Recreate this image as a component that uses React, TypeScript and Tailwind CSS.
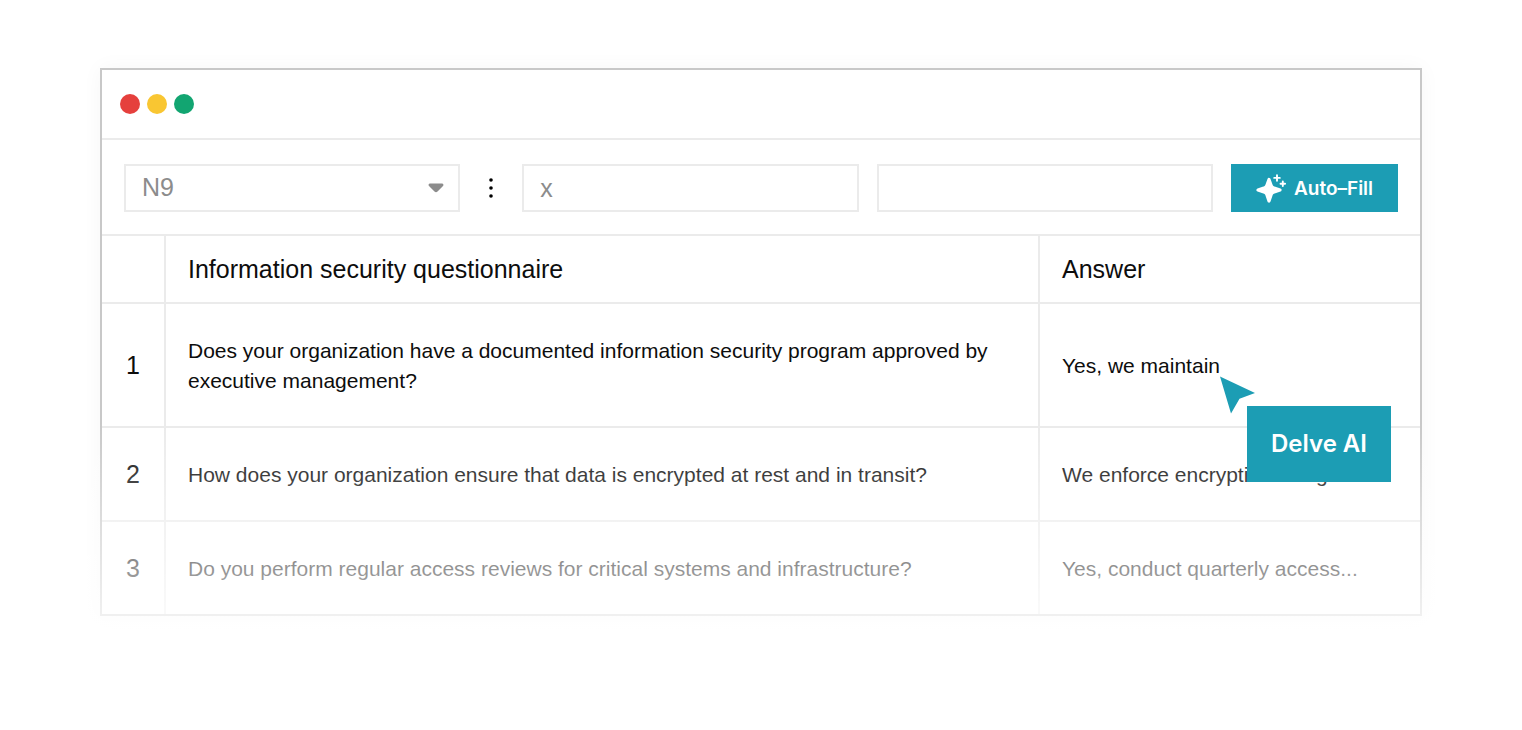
const rows = [
  {
    id: 1,
    height: "h-[124px]",
    question:
      "Does your organization have a documented information security program approved by executive management?",
    answer: "Yes, we maintain",
    active: true,
  },
  {
    id: 2,
    height: "h-[94px]",
    question:
      "How does your organization ensure that data is encrypted at rest and in transit?",
    answer: "We enforce encryption using...",
  },
  {
    id: 3,
    height: "h-[92px]",
    question:
      "Do you perform regular access reviews for critical systems and infrastructure?",
    answer: "Yes, conduct quarterly access...",
  },
];

const SparkleIcon = () => (
  <svg
    viewBox="0 1 30 30"
    className="h-[30px] w-[30px]"
    fill="white"
    aria-hidden="true"
  >
    <path
      d="M13 6.500 15.200 12.600Q15.800 14.200 17.400 14.800L24 17 17.400 19.200Q15.800 19.800 15.200 21.400L13 28 10.800 21.400Q10.200 19.800 8.600 19.200L2 17 8.600 14.800Q10.200 14.200 10.800 12.600z"
      stroke="white"
      strokeWidth="3.200"
      strokeLinejoin="round"
    />
    <path
      d="M21 2.200v5.500M18.200 4.900h5.600M26.800 8.400v4.600M24.500 10.700h4.600"
      stroke="white"
      strokeWidth="1.900"
      strokeLinecap="round"
    />
  </svg>
);

const Cursor = () => (
  <div className="absolute top-[25px] left-full z-10">
    <svg viewBox="0 0 36 38" className="h-[38px] w-9" aria-hidden="true">
      <path d="M0 0.500 35 17 19.500 22.800 11 37.500z" fill="#1c9db4" />
    </svg>
    <div className="-mt-2 ml-[27px] flex h-[76px] w-36 items-center justify-center bg-[#1c9db4] font-['Inter',sans-serif] text-2xl font-semibold whitespace-nowrap text-white">
      Delve AI
    </div>
  </div>
);

const Toolbar = () => (
  <div className="grid grid-cols-[1fr_26px_1fr_1fr_167px] items-center gap-[18px] border-b-2 border-[#ebebeb] px-[22px] pt-6 pb-[22px]">
    <div className="relative h-12">
      <select
        aria-label="Cell"
        className="h-full w-full appearance-none border-2 border-[#ebebeb] bg-white px-4 text-[25px] text-[#8c8c8c]"
      >
        <option>N9</option>
      </select>
      <svg
        viewBox="0 0 16 10"
        className="pointer-events-none absolute top-[19px] right-4 h-[10px] w-4"
        fill="#8c8c8c"
        aria-hidden="true"
      >
        <path d="M2 .5h12c1.400 0 2 1.500 1 2.500L9.500 8.600c-.9.900-2.100.900-3 0L1 3C0 2 .6.500 2 .5z" />
      </svg>
    </div>
    <button
      type="button"
      aria-label="More options"
      className="flex h-12 items-center justify-center"
    >
      <svg viewBox="0 0 4 20" className="h-5 w-1" aria-hidden="true">
        <circle cx="2" cy="2" r="1.800" />
        <circle cx="2" cy="10" r="1.800" />
        <circle cx="2" cy="18" r="1.800" />
      </svg>
    </button>
    <input
      type="text"
      aria-label="Formula"
      defaultValue="x"
      className="h-12 w-full border-2 border-[#ebebeb] px-4 text-[25px] text-[#8c8c8c]"
    />
    <input
      type="text"
      aria-label="Value"
      className="h-12 w-full border-2 border-[#ebebeb] px-4 text-[25px] text-[#8c8c8c]"
    />
    <button
      type="button"
      className="flex h-12 items-center justify-center gap-2 bg-[#1c9db4] pt-0.5 font-['Inter',sans-serif] text-[19px] font-semibold text-white"
    >
      <SparkleIcon />
      Auto–Fill
    </button>
  </div>
);

const Questionnaire = () => (
  <table className="w-full table-fixed border-separate border-spacing-0 text-left">
    <thead>
      <tr className="h-[68px] text-[25px]">
        <th
          aria-label="Row"
          className="w-16 border-r-2 border-b-2 border-[#ebebeb]"
        />
        <th className="border-r-2 border-b-2 border-[#ebebeb] px-[22px] pt-0.5 font-normal">
          Information security questionnaire
        </th>
        <th className="w-[380px] border-b-2 border-[#ebebeb] px-[22px] pt-0.5 font-normal">
          Answer
        </th>
      </tr>
    </thead>
    <tbody className="[&>tr:not(:last-child)>*]:border-b-2">
      {rows.map((row) => (
        <tr key={row.id} className={row.height}>
          <th className="border-r-2 border-[#ebebeb] pt-0.5 text-center text-[25px] font-normal">
            {row.id}
          </th>
          <td className="border-r-2 border-[#ebebeb] px-[22px] pt-0.5 text-[21px] leading-[30px]">
            {row.question}
          </td>
          <td className="border-[#ebebeb] px-[22px] pt-0.5 text-[21px] leading-[30px] whitespace-nowrap">
            <span className="relative inline-block">
              {row.answer}
              {row.active && <Cursor />}
            </span>
          </td>
        </tr>
      ))}
    </tbody>
  </table>
);

export default function App() {
  return (
    <main className="bg-white px-[100px] pt-[68px] pb-[114px] font-['Liberation_Sans',sans-serif] text-[#0d0d0d]">
      <div className="relative border-2 border-[#c8c8c8] bg-white shadow-[0_0_20px_rgba(0,0,0,0.04)]">
        <div className="flex h-[70px] items-center gap-[7px] border-b-2 border-[#ebebeb] px-[18px]">
          <span className="h-5 w-5 rounded-full bg-[#e5403d]" />
          <span className="h-5 w-5 rounded-full bg-[#f9c632]" />
          <span className="h-5 w-5 rounded-full bg-[#12a571]" />
        </div>
        <Toolbar />
        <Questionnaire />
        <div className="pointer-events-none absolute -inset-x-5 -bottom-5 h-[212px] bg-linear-to-b from-white/0 to-white/80" />
      </div>
    </main>
  );
}
